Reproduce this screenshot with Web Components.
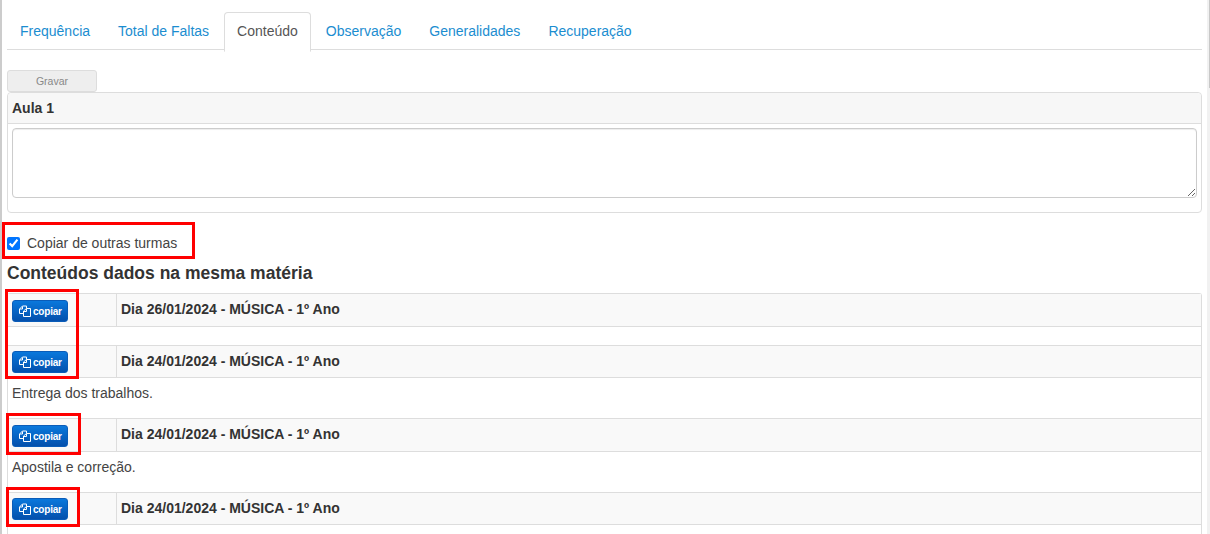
<!DOCTYPE html>
<html lang="pt">
<head>
<meta charset="utf-8">
<title>Conteúdo</title>
<style>
  html, body { margin: 0; height: 534px; overflow: hidden; background: #fff; }
  body { font: 14px/20px "Liberation Sans", Arial, sans-serif; color: #333; position: relative; }
</style>
</head>
<body>
<app-page>
  <tab-bar active="Conteúdo" tabs="Frequência|Total de Faltas|Conteúdo|Observação|Generalidades|Recuperação"></tab-bar>
  <save-button>Gravar</save-button>
  <lesson-panel title="Aula 1"></lesson-panel>
  <copy-check>Copiar de outras turmas</copy-check>
  <section-title>Conteúdos dados na mesma matéria</section-title>
  <content-table>
    <content-row day="Dia 26/01/2024 - MÚSICA - 1º Ano" h="33" b="19"></content-row>
    <content-row day="Dia 24/01/2024 - MÚSICA - 1º Ano" h="32" b="41">Entrega dos trabalhos.</content-row>
    <content-row day="Dia 24/01/2024 - MÚSICA - 1º Ano" h="33" b="41">Apostila e correção.</content-row>
    <content-row day="Dia 24/01/2024 - MÚSICA - 1º Ano" h="32" b="41"></content-row>
  </content-table>
</app-page>
<side-scroll></side-scroll>
<mark-box style="left:2px;top:222px;width:193px;height:37px"></mark-box>
<mark-box style="left:5px;top:289px;width:74px;height:90px"></mark-box>
<mark-box style="left:6px;top:413px;width:75px;height:42px"></mark-box>
<mark-box style="left:6px;top:487px;width:74px;height:40px"></mark-box>

<script>
(function () {

  function define(name, css, html) {
    customElements.define(name, class extends HTMLElement {
      constructor() {
        super();
        this.attachShadow({ mode: 'open' });
      }
      connectedCallback() {
        this.shadowRoot.innerHTML = `<style>${css}</style>${typeof html === 'function' ? html(this) : html}`;
      }
    });
  }

  define('app-page', `
    :host { display: block; height: 534px; overflow: hidden; box-sizing: border-box; padding: 12px 8px 0 5px; border-left: 2px solid #ccc; }
  `, '<slot></slot>');

  define('tab-bar', `
    :host { display: flex; height: 38px; box-sizing: border-box; border-bottom: 1px solid #ddd; }
    a { display: block; padding: 8px 12px 0; height: 30px; color: #1b8dd0; border: 1px solid transparent; border-radius: 4px 4px 0 0; margin-right: 2px; white-space: nowrap; }
    a.on { color: #555; background: #fff; border-color: #ddd; border-bottom-color: #fff; }
  `, el => el.getAttribute('tabs').split('|').map(t =>
    `<a class="${t === el.getAttribute('active') ? 'on' : ''}">${t}</a>`).join(''));

  define('save-button', `
    :host { display: block; margin-top: 20px; height: 22px; }
    button { display: block; width: 90px; height: 22px; padding: 0; border: 1px solid #ddd; border-radius: 3px; background: #eee; color: #888; font: 10.5px "Liberation Sans", Arial, sans-serif; }
  `, '<button><slot></slot></button>');

  define('lesson-panel', `
    :host { display: block; height: 121px; box-sizing: border-box; border: 1px solid #ddd; border-radius: 4px; }
    header { height: 31px; box-sizing: border-box; padding: 5px 4px; background: #f7f7f7; border-bottom: 1px solid #ddd; font-weight: bold; border-radius: 4px 4px 0 0; }
    textarea { display: block; box-sizing: border-box; margin: 4px 4px 0; width: calc(100% - 8px); height: 70px; border: 1px solid #ccc; border-radius: 4px; box-shadow: inset 0 1px 1px rgba(0,0,0,.075); }
  `, el => `<header>${el.getAttribute('title')}</header><textarea></textarea>`);

  define('copy-check', `
    :host { display: flex; align-items: center; gap: 7px; margin-top: 20px; height: 20px; color: #444; }
    input { width: 13px; height: 13px; margin: 0; accent-color: #0075ff; }
  `, '<input type="checkbox" checked><span><slot></slot></span>');

  define('section-title', `
    :host { display: block; margin-top: 10px; height: 20px; font-size: 17.5px; line-height: 20px; font-weight: bold; }
  `, '<slot></slot>');

  define('content-table', `
    :host { display: block; margin-top: 10px; border: 1px solid #ddd; border-bottom: 0; border-radius: 3px 3px 0 0; }
  `, '<slot></slot>');

  define('copy-button', `
    :host { display: block; width: 56px; height: 22px; }
    button { display: flex; align-items: center; gap: 2px; width: 56px; height: 22px; padding: 0 0 0 6px; box-sizing: border-box; border: 1px solid #0a5cb8; border-radius: 3px; color: #fff; background: linear-gradient(#0a78dc, #0450ac); font: bold 10px "Liberation Sans", Arial, sans-serif; letter-spacing: -.2px; }
    svg { width: 12px; height: 12px; flex: none; }
  `, `<button><svg viewBox="0 0 12 12" fill="none" stroke="#fff" stroke-width="1"><path d="M4 8.500H.5V4L3.500 1H7.500V3"/><path d="M3.500 1.500V4H1"/><path d="M4.500 11.500V6L7.500 3.500h4v8z"/><path d="M7.500 3.500V6.500H4.500"/></svg><span>copiar</span></button>`);

  define('content-row', `
    :host { display: block; }
    .head { display: grid; grid-template-columns: 109px 1fr; background: #f9f9f9; border-bottom: 1px solid #ddd; box-sizing: border-box; }
    .btn { padding-left: 4px; box-sizing: border-box; border-right: 1px solid #ddd; }
    .day { padding: 5px 4px 0 4px; font-weight: bold; }
    .body { box-sizing: border-box; padding: 5px 4px; border-bottom: 1px solid #ddd; color: #444; }
  `, el => {
    const h = el.getAttribute('h'), b = el.getAttribute('b');
    return `<div class="head" style="height:${h}px"><div class="btn" style="padding-top:${h - 27}px"><copy-button></copy-button></div><div class="day">${el.getAttribute('day')}</div></div>
      <div class="body" style="height:${b}px"><slot></slot></div>`;
  });

  // sliver of the outer scrollbar along the right edge of the capture
  define('side-scroll', `
    :host { display: block; position: absolute; right: 0; top: 0; width: 3px; height: 534px; background: #f1f1f1; }
    i { display: block; margin-left: 2px; width: 1px; height: 88px; background: #c8c8c8; }
  `, '<i></i>');

  // the red markers were drawn over the screenshot, so they float above the page
  define('mark-box', `
    :host { display: block; position: absolute; box-sizing: border-box; border: 3px solid #f00; }
  `, '');

})();
</script>
</body>
</html>
